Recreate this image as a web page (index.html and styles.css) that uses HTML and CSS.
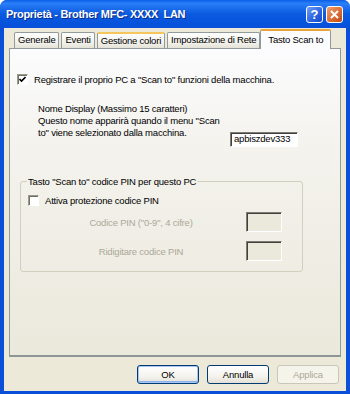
FILE: index.html
```html
<!DOCTYPE html>
<html lang="it">
<head>
    <meta charset="UTF-8">
    <title>Proprietà - Brother MFC-XXXX LAN</title>
    <link rel="stylesheet" href="styles.css">
</head>
<body>
    <div class="window">
        <div class="titlebar">
            <span class="title">Proprietà - Brother MFC- XXXX&nbsp; LAN</span>
            <div class="caption-btns">
                <span class="cap-btn help">?</span>
                <span class="cap-btn close">
                    <svg width="9" height="9" viewBox="0 0 9 9"><path d="M1 1 L8 8 M8 1 L1 8" stroke="#fff" stroke-width="2" /></svg>
                </span>
            </div>
        </div>

        <div class="client">
            <div class="tabs">
                <span class="tab">Generale</span>
                <span class="tab">Eventi</span>
                <span class="tab hot">Gestione colori</span>
                <span class="tab">Impostazione di Rete</span>
                <span class="tab active">Tasto Scan to</span>
            </div>

            <div class="panel">
                <label class="check-row">
                    <span class="checkbox checked">
                        <svg width="7" height="7" viewBox="0 0 7 7"><path d="M0.5 3 L2.5 5 L6.5 1" stroke="#000" stroke-width="1.6" fill="none" /></svg>
                    </span>
                    Registrare il proprio PC a "Scan to" funzioni della macchina.
                </label>

                <div class="display-name">
                    <p class="display-text">Nome Display (Massimo 15 caratteri)<br>Questo nome apparirà quando il menu "Scan<br>to" viene selezionato dalla macchina.</p>
                    <span class="field name-field">apbiszdev333</span>
                </div>

                <fieldset class="group">
                    <legend>Tasto "Scan to" codice PIN per questo PC</legend>
                    <label class="check-row">
                        <span class="checkbox"></span>
                        Attiva protezione codice PIN
                    </label>
                    <div class="pin-row">
                        <span class="pin-label">Codice PIN ("0-9", 4 cifre)</span>
                        <span class="field pin-field"></span>
                    </div>
                    <div class="pin-row">
                        <span class="pin-label">Ridigitare codice PIN</span>
                        <span class="field pin-field"></span>
                    </div>
                </fieldset>
            </div>

            <div class="buttons">
                <button class="btn default">OK</button>
                <button class="btn">Annulla</button>
                <button class="btn" disabled>Applica</button>
            </div>
        </div>
    </div>
</body>
</html>
```

FILE: styles.css
```css
/* Fenetre style Windows XP */
body {
    margin: 0;
    padding: 0;
    font-family: "Liberation Sans", Arial, sans-serif;
    font-size: 9.5px;
    letter-spacing: -0.2px;
}

.window {
    width: 350px;
    height: 394px;
    box-sizing: border-box;
    background: #0a4fd8;
    border-radius: 7px 7px 0 0;
    padding: 0 4px 3px 4px;
    display: flex;
    flex-direction: column;
}

/* Barre de titre */
.titlebar {
    height: 28px;
    flex: none;
    display: flex;
    align-items: center;
    justify-content: space-between;
    background: linear-gradient(#0a5fe8, #2a7ef8 12%, #0b5ae0 50%, #0653db 85%, #0a4fd8);
    margin: 0 -4px;
    padding: 0 7px 0 6px;
    border-radius: 7px 7px 0 0;
}

.title {
    color: #fff;
    font-weight: bold;
    font-size: 11px;
    letter-spacing: -0.3px;
    text-shadow: 1px 1px 0 #0a2a8a;
}

.caption-btns {
    display: flex;
    gap: 3px;
}

.cap-btn {
    width: 17px;
    height: 17px;
    box-sizing: border-box;
    border: 1px solid #fff;
    border-radius: 3px;
    display: flex;
    align-items: center;
    justify-content: center;
    color: #fff;
    font-weight: bold;
    font-size: 13px;
    letter-spacing: 0;
}

.help {
    background: linear-gradient(135deg, #6fa0f8, #2a62e0 60%, #1a48c8);
}

.close {
    background: linear-gradient(135deg, #f0a070, #d86830 60%, #c04818);
}

/* Zone client */
.client {
    flex: 1;
    background: #ece9d8;
    padding: 0 5px 0 5px;
    display: flex;
    flex-direction: column;
}

.tabs {
    display: flex;
    align-items: flex-end;
    height: 20px;
    padding-left: 5px;
}

.tab {
    height: 15px;
    line-height: 14px;
    padding: 0 3px;
    border: 1px solid #919b9c;
    border-bottom: none;
    border-radius: 2px 2px 0 0;
    background: linear-gradient(#fefefe, #f0efe8 70%, #e4e2d6);
    color: #000;
    margin-right: 2px;
    white-space: nowrap;
}

.tab.hot {
    border-top: 2px solid #f6c65c;
    height: 14px;
}

.tab.active {
    height: 18px;
    line-height: 17px;
    border-top: 2px solid #e9a43a;
    background: #fcfcfe;
    padding: 0 7px;
    margin-left: -2px;
    margin-bottom: -1px;
    position: relative;
    z-index: 1;
}

.panel {
    height: 309px;
    width: 332px;
    box-sizing: border-box;
    border: 1px solid #919b9c;
    border-bottom: 2px solid #8d9596;
    background: linear-gradient(#fcfcfe, #f4f3ee 30%, #ebe9dc);
    padding: 25px 0 0 7px;
}

.check-row {
    display: flex;
    align-items: center;
    gap: 6px;
}

.checkbox {
    width: 11px;
    height: 11px;
    box-sizing: border-box;
    background: #fff;
    border: 1px solid #fff;
    border-top-color: #9a9a8c;
    border-left-color: #9a9a8c;
    box-shadow: inset 1px 1px 0 #707064;
    display: flex;
    align-items: center;
    justify-content: center;
}

.display-name {
    display: flex;
    align-items: flex-end;
    margin: 18px 0 0 21px;
}

.display-text {
    margin: 0;
    width: 192px;
    line-height: 12px;
}

.field {
    display: block;
    box-sizing: border-box;
    background: #fff;
    border: 1px solid #fff;
    border-top-color: #7f7d72;
    border-left-color: #7f7d72;
    box-shadow: inset 1px 1px 0 #404040;
}

.name-field {
    width: 68px;
    height: 15px;
    line-height: 12px;
    padding-left: 3px;
    margin-bottom: -8px;
}

/* Groupe code PIN */
.group {
    margin: 37px 0 0 3px;
    width: 283px;
    height: 96px;
    box-sizing: border-box;
    border: 1px solid #d0d0bf;
    border-radius: 3px;
    padding: 0 0 0 7px;
}

.group legend {
    padding: 0 1px;
    margin-left: -1px;
}

.group .check-row {
    margin-top: 8px;
}

.pin-row {
    display: flex;
    align-items: center;
    padding-left: 21px;
    margin-top: 6px;
}

.pin-row + .pin-row {
    margin-top: 9px;
}

.pin-label {
    color: #aca899;
    width: 184px;
    text-align: center;
    margin-right: 13px;
}

.pin-field {
    width: 36px;
    height: 20px;
    background: #ebe9dc;
}

/* Boutons */
.buttons {
    display: flex;
    justify-content: flex-end;
    gap: 8px;
    padding: 8px 2px 0 0;
}

.btn {
    width: 62px;
    height: 19px;
    padding: 0;
    border: 1px solid #003c74;
    border-radius: 3px;
    background: linear-gradient(#ffffff, #f4f3ee 60%, #e3e1d6);
    font-family: "Liberation Sans", Arial, sans-serif;
    font-size: 9.5px;
    letter-spacing: -0.2px;
    color: #000;
}

.btn.default {
    box-shadow: inset 0 0 0 1px #a9c6f3, inset 0 -1px 0 1px #8bb1ee;
}

.btn:disabled {
    border-color: #c9c7ba;
    background: #f5f4ea;
    color: #aca899;
}
```
